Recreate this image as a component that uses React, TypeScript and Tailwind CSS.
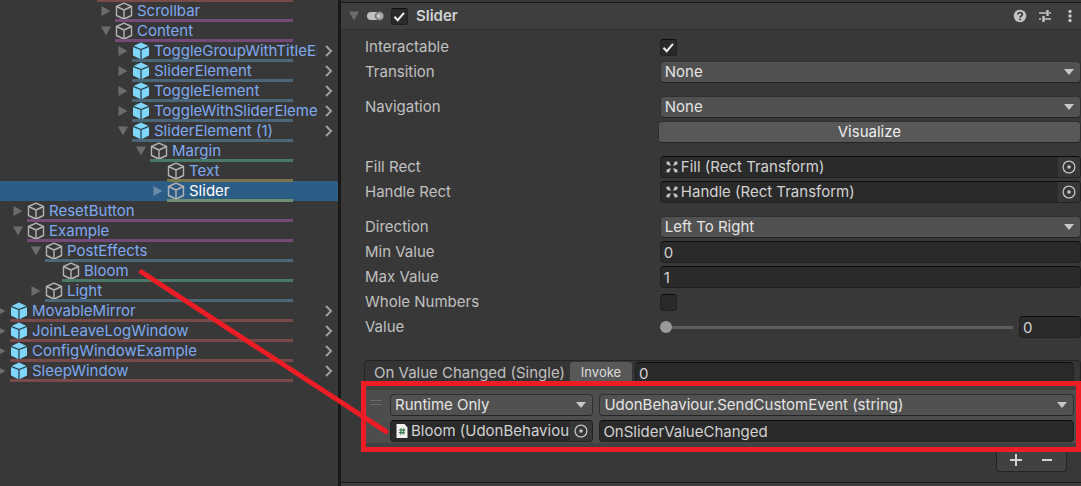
import { useState } from "react";
import type { ReactNode } from "react";

type Node = {
  name: string;
  indent: string;
  line: string;
  arrow?: "open" | "closed";
  prefab?: boolean;
  selected?: boolean;
};

const PURPLE = "bg-[#754a78]";
const BLUE = "bg-[#4a6678]";
const GREEN = "bg-[#4a7868]";
const YELLOW = "bg-[#78754a]";
const LIME = "bg-[#6f8f70]";
const RED = "bg-[#784a4a]";

const nodes: Node[] = [
  { name: "Scrollbar", indent: "w-[115px]", line: PURPLE, arrow: "closed" },
  { name: "Content", indent: "w-[115px]", line: PURPLE, arrow: "open" },
  { name: "ToggleGroupWithTitleElement", indent: "w-[132px]", line: BLUE, arrow: "closed", prefab: true },
  { name: "SliderElement", indent: "w-[132px]", line: BLUE, arrow: "closed", prefab: true },
  { name: "ToggleElement", indent: "w-[132px]", line: BLUE, arrow: "closed", prefab: true },
  { name: "ToggleWithSliderElement", indent: "w-[132px]", line: BLUE, arrow: "closed", prefab: true },
  { name: "SliderElement (1)", indent: "w-[132px]", line: BLUE, arrow: "open", prefab: true },
  { name: "Margin", indent: "w-[150px]", line: GREEN, arrow: "open" },
  { name: "Text", indent: "w-[167px]", line: YELLOW },
  { name: "Slider", indent: "w-[167px]", line: LIME, arrow: "closed", selected: true },
  { name: "ResetButton", indent: "w-[27px]", line: PURPLE, arrow: "closed" },
  { name: "Example", indent: "w-[27px]", line: PURPLE, arrow: "open" },
  { name: "PostEffects", indent: "w-[45px]", line: BLUE, arrow: "open" },
  { name: "Bloom", indent: "w-[62px]", line: GREEN },
  { name: "Light", indent: "w-[45px]", line: BLUE, arrow: "closed" },
  { name: "MovableMirror", indent: "w-[10px]", line: RED, arrow: "closed", prefab: true },
  { name: "JoinLeaveLogWindow", indent: "w-[10px]", line: RED, arrow: "closed", prefab: true },
  { name: "ConfigWindowExample", indent: "w-[10px]", line: RED, arrow: "closed", prefab: true },
  { name: "SleepWindow", indent: "w-[10px]", line: RED, arrow: "closed", prefab: true },
];

function Triangle({ open }: { open: boolean }) {
  return (
    <svg viewBox="0 0 10 10" className="size-[10px] shrink-0 fill-current">
      <path d={open ? "M0 .5h10L5 9.5z" : "M.5 0v10L9.500 5z"} />
    </svg>
  );
}

function Cube({ filled }: { filled?: boolean }) {
  return filled ? (
    <svg viewBox="0 0 18 18" className="size-[18px] shrink-0">
      <path d="M9 .5 17 4.200v9.300L9 17.500 1 13.500V4.200z" fill="#7fd6fd" />
      <path d="M1 4.300 9 7.600l8-3.300M9 7.600v9.900" fill="none" stroke="#2c4350" strokeWidth="1.300" />
    </svg>
  ) : (
    <svg viewBox="0 0 18 18" className="size-[18px] shrink-0" fill="none" stroke="#b4b4b4" strokeWidth="1.400" strokeLinejoin="round">
      <path d="M9 1.200 16.500 4.500v9L9 17l-7.500-3.500v-9z" />
      <path d="M1.500 4.500 9 8l7.500-3.500M9 8v9" />
    </svg>
  );
}

function TreeRow({ node }: { node: Node }) {
  return (
    <li
      role="treeitem"
      aria-selected={!!node.selected}
      className={node.selected ? "flex h-5 bg-[#2c5d87] text-white" : "flex h-5 text-[#7fa9f0]"}
    >
      <span className={`${node.indent} flex shrink-0 items-center justify-end pr-1 ${node.selected ? "text-[#6b8aa5]" : "text-[#6c6c6c]"}`}>
        {node.arrow && <Triangle open={node.arrow === "open"} />}
      </span>
      <span className="relative flex min-w-0 flex-1 items-center">
        <Cube filled={node.prefab} />
        <span className="ml-1 min-w-0 flex-1 overflow-hidden whitespace-nowrap">{node.name}</span>
        <span className="flex w-[21px] shrink-0 justify-center pl-[2px]">
          {node.prefab && (
            <svg viewBox="0 0 8 12" className="h-3 w-2" fill="none" stroke="#a0a0a0" strokeWidth="2">
              <path d="m1 1 5 5-5 5" />
            </svg>
          )}
        </span>
        <span className={`absolute right-[45px] -bottom-px left-0 h-[3px] ${node.line}`} />
      </span>
    </li>
  );
}

function Caret() {
  return (
    <svg viewBox="0 0 10 6" className="pointer-events-none absolute right-[7px] h-[6px] w-[10px] fill-[#c8c8c8]">
      <path d="M0 0h10L5 6z" />
    </svg>
  );
}

function Dropdown({ id, label, value }: { id: string; label?: string; value: string }) {
  return (
    <span className="relative flex min-w-0 flex-1 items-center">
      <select
        id={id}
        aria-label={label}
        className="h-[22px] w-full appearance-none rounded-[4px] border border-[#303030] border-b-[#242424] bg-[#515151] pb-px pl-1 text-[#e4e4e4]"
      >
        <option>{value}</option>
      </select>
      <Caret />
    </span>
  );
}

const fieldBox = "h-[22px] min-w-0 rounded-[4px] border border-[#212121] border-t-[#0d0d0d] bg-[#2a2a2a] text-[#d2d2d2]";

function TextBox({ id, label, value }: { id: string; label?: string; value: string }) {
  return <input id={id} aria-label={label} type="text" defaultValue={value} className={`${fieldBox} w-full flex-1 px-[3px]`} />;
}

function Check({ id, label, on }: { id: string; label?: string; on: boolean }) {
  const [checked, setChecked] = useState(on);
  return (
    <span className="relative flex size-[17px] shrink-0">
      <input
        id={id}
        aria-label={label}
        type="checkbox"
        checked={checked}
        onChange={(e) => setChecked(e.target.checked)}
        className="size-full appearance-none rounded-[3px] border border-[#212121] border-t-[#0d0d0d] bg-[#2a2a2a]"
      />
      {checked && (
        <svg viewBox="0 0 17 17" className="pointer-events-none absolute inset-0" fill="none" stroke="#f0f0f0" strokeWidth="2">
          <path d="m3.500 8.800 3.200 3.400L13 4.800" />
        </svg>
      )}
    </span>
  );
}

function PickerButton({ label }: { label: string }) {
  return (
    <button type="button" aria-label={label} className="flex h-5 w-[22px] shrink-0 items-center justify-center rounded-r-[3px] bg-[#373737]">
      <svg viewBox="0 0 14 14" className="size-[14px]" fill="none" stroke="#c4c4c4" strokeWidth="1.300">
        <circle cx="7" cy="7" r="5.900" />
        <circle cx="7" cy="7" r="1.800" fill="#c4c4c4" stroke="none" />
      </svg>
    </button>
  );
}

function RectTransformIcon() {
  return (
    <svg viewBox="0 0 12 12" className="size-3 shrink-0 fill-[#c4c4c4]">
      <path d="M.3.8 3.200.6 5 5 .8 3.600zM11.700.8 8.800.6 7 5l4.200-1.400zM.3 11.200l2.900.2L5 7 .8 8.400zM11.700 11.200l-2.900.2L7 7l4.200 1.400z" />
    </svg>
  );
}

function ScriptIcon() {
  return (
    <svg viewBox="0 0 12 14" className="h-[14px] w-3 shrink-0">
      <path d="M.5 0H8.500L11.500 3.500V14H.5z" fill="#f1f1ee" />
      <path d="M5.200 4.200 4.600 10.500M7.800 4.200 7.200 10.500M3.200 6.200h6M2.900 8.700h6" stroke="#3d7f54" strokeWidth="1.300" />
    </svg>
  );
}

function ObjectField({ icon, value, label }: { icon: ReactNode; value: string; label: string }) {
  return (
    <div className={`${fieldBox} flex flex-1 items-center pl-[5px]`}>
      {icon}
      <span className="ml-[3px] min-w-0 flex-1 overflow-hidden whitespace-nowrap">{value}</span>
      <PickerButton label={label} />
    </div>
  );
}

function Row({ label, htmlFor, children }: { label: string; htmlFor?: string; children: ReactNode }) {
  return (
    <div className="grid h-[22px] grid-cols-[7fr_10fr]">
      {htmlFor ? (
        <label htmlFor={htmlFor} className="self-center">{label}</label>
      ) : (
        <span className="self-center">{label}</span>
      )}
      <div className="flex min-w-0 items-center">{children}</div>
    </div>
  );
}

function ComponentHeader() {
  return (
    <header className="flex h-[28px] items-center border-t border-b border-t-[#1a1a1a] border-b-[#303030] bg-[#3e3e3e] pr-[3px] pl-2">
      <span className="text-[#6c6c6c]">
        <Triangle open />
      </span>
      <svg viewBox="0 0 18 10" className="mr-[6px] ml-2 h-[10px] w-[18px]">
        <rect x="0" y="1" width="13" height="8" rx="4" fill="#c0c0c0" />
        <circle cx="12.500" cy="5" r="4.200" fill="#c0c0c0" stroke="#5a5a5a" strokeWidth="1" />
        <circle cx="11.800" cy="5" r="2.500" fill="#d0d0d0" stroke="#6a6a6a" strokeWidth=".8" />
      </svg>
      <Check id="component-enabled" label="Slider enabled" on />
      <h2 className="ml-2 flex-1 font-semibold text-[#d2d2d2]">Slider</h2>
      <div className="flex items-center gap-[9px]">
        <button type="button" aria-label="Help">
          <svg viewBox="0 0 16 16" className="size-4">
            <circle cx="8" cy="8" r="6.200" fill="#c4c4c4" />
            <path d="M5.900 6.600c0-1.400 1-2.100 2.200-2.100s2.200.7 2.200 1.900c0 1.600-2.200 1.500-2.200 3.100M8.100 10.500v1.700" fill="none" stroke="#3a3a3a" strokeWidth="1.700" />
          </svg>
        </button>
        <button type="button" aria-label="Presets">
          <svg viewBox="0 0 16 16" className="size-4" stroke="#c4c4c4" fill="none">
            <path d="M2 5h7M12 5h2M2 11h2M7 11h7" strokeWidth="1.400" />
            <path d="M10.500 2v6M6.500 8v6" strokeWidth="2.400" />
          </svg>
        </button>
        <button type="button" aria-label="More options">
          <svg viewBox="0 0 16 16" className="size-4 fill-[#c4c4c4]">
            <circle cx="8" cy="3.500" r="1.700" />
            <circle cx="8" cy="8" r="1.700" />
            <circle cx="8" cy="12.500" r="1.700" />
          </svg>
        </button>
      </div>
    </header>
  );
}

function EventList() {
  return (
    <section className="mt-[22px]">
      <div className="flex h-[25px] items-start rounded-t-[4px] border border-b-0 border-[#242424] bg-[#353535] pt-px pr-[6px] pl-[9px]">
        <h3 className="pt-px">On Value Changed (Single)</h3>
        <div className="ml-auto flex w-[504px] gap-[3px]">
          <button type="button" className="h-5 w-[62px] rounded-[3px] bg-[#585858] text-[13px] leading-5 text-[#dcdcdc]">Invoke</button>
          <TextBox id="invoke-argument" label="Invoke argument" value="0" />
        </div>
      </div>
      <div className="relative flex h-[63px] border-y-[5px] border-[#414141] bg-[#4d4d4d] pt-1 pr-[7px] pl-[6px]">
        <svg viewBox="0 0 12 6" className="mt-[6px] mr-2 h-[6px] w-3" stroke="#6a6a6a">
          <path d="M0 .5h12M0 4.500h12" />
        </svg>
        <div className="grid flex-1 grid-cols-[3fr_7fr] content-start gap-x-[6px] gap-y-[4px]">
          <Dropdown id="call-state" label="Call state" value="Runtime Only" />
          <Dropdown id="call-function" label="Function" value="UdonBehaviour.SendCustomEvent (string)" />
          <ObjectField icon={<ScriptIcon />} value="Bloom (UdonBehaviour)" label="Select target object" />
          <TextBox id="call-argument" label="Argument" value="OnSliderValueChanged" />
        </div>
        <div className="pointer-events-none absolute -inset-y-[9px] right-0 -left-[3px] border-[5px] border-[#ee1c25]" />
      </div>
      <div className="mr-[14px] ml-auto flex h-[24px] w-[71px] items-center justify-around rounded-b-[4px] border border-t-0 border-[#242424] bg-[#414141] px-1 text-[#d2d2d2]">
        <button type="button" aria-label="Add">
          <svg viewBox="0 0 12 12" className="size-3" stroke="currentColor" strokeWidth="2"><path d="M6 0v12M0 6h12" /></svg>
        </button>
        <button type="button" aria-label="Remove">
          <svg viewBox="0 0 12 12" className="size-3" stroke="currentColor" strokeWidth="2"><path d="M1 6h10" /></svg>
        </button>
      </div>
    </section>
  );
}

export default function App() {
  return (
    <div className="relative flex min-h-screen overflow-hidden bg-[#383838] font-['Inter','Liberation_Sans',sans-serif] text-[15px] leading-5 text-[#c0c0c0]">
      <nav aria-label="Hierarchy" className="w-[338px] shrink-0 overflow-hidden">
        <div className="relative h-px">
          <span className="absolute right-[45px] -bottom-px left-[97px] h-[2px] bg-[#784a4a]" />
        </div>
        <ul role="tree">
          {nodes.map((n) => (
            <TreeRow key={n.name} node={n} />
          ))}
        </ul>
      </nav>
      <main className="flex min-w-0 flex-1 flex-col border-l-[3px] border-[#191919] pt-[2px]">
        <ComponentHeader />
        <div className="flex flex-col gap-[3px] pt-[6px] pl-6">
          <Row label="Interactable" htmlFor="interactable"><Check id="interactable" on /></Row>
          <Row label="Transition" htmlFor="transition"><Dropdown id="transition" value="None" /></Row>
          <div className="h-[7px]" />
          <Row label="Navigation" htmlFor="navigation"><Dropdown id="navigation" value="None" /></Row>
          <div className="grid grid-cols-[7fr_10fr]">
            <button type="button" className="col-start-2 -ml-[2px] h-[22px] rounded-[4px] border border-[#303030] border-b-[#242424] bg-[#585858] pb-px leading-5 text-[#eeeeee]">Visualize</button>
          </div>
          <div className="h-[7px]" />
          <Row label="Fill Rect"><ObjectField icon={<RectTransformIcon />} value="Fill (Rect Transform)" label="Select fill rect" /></Row>
          <Row label="Handle Rect"><ObjectField icon={<RectTransformIcon />} value="Handle (Rect Transform)" label="Select handle rect" /></Row>
          <div className="h-[7px]" />
          <Row label="Direction" htmlFor="direction"><Dropdown id="direction" value="Left To Right" /></Row>
          <Row label="Min Value" htmlFor="min-value"><TextBox id="min-value" value="0" /></Row>
          <Row label="Max Value" htmlFor="max-value"><TextBox id="max-value" value="1" /></Row>
          <Row label="Whole Numbers" htmlFor="whole-numbers"><Check id="whole-numbers" on={false} /></Row>
          <Row label="Value" htmlFor="value">
            <input
              id="value"
              type="range"
              min="0"
              max="1"
              step="0.01"
              defaultValue="0"
              className="mr-[6px] h-3 min-w-0 flex-1 appearance-none bg-transparent [&::-webkit-slider-runnable-track]:h-[3px] [&::-webkit-slider-runnable-track]:bg-[#5e5e5e] [&::-webkit-slider-thumb]:-mt-[5px] [&::-webkit-slider-thumb]:size-3 [&::-webkit-slider-thumb]:appearance-none [&::-webkit-slider-thumb]:rounded-full [&::-webkit-slider-thumb]:bg-[#999999]"
            />
            <div className="flex w-[62px]">
              <TextBox id="value-number" label="Value number" value="0" />
            </div>
          </Row>
        </div>
        <div className="pl-[23px]">
          <EventList />
        </div>
        <div className="mt-[10px] flex-1 border-t border-[#1a1a1a] bg-[#3e3e3e]" />
      </main>
      <svg className="pointer-events-none absolute top-0 left-0 h-[486px] w-[400px]" viewBox="0 0 400 486">
        <path d="M141.500 272 386 431.500" stroke="#ee1c25" strokeWidth="5" strokeLinecap="round" />
      </svg>
    </div>
  );
}
